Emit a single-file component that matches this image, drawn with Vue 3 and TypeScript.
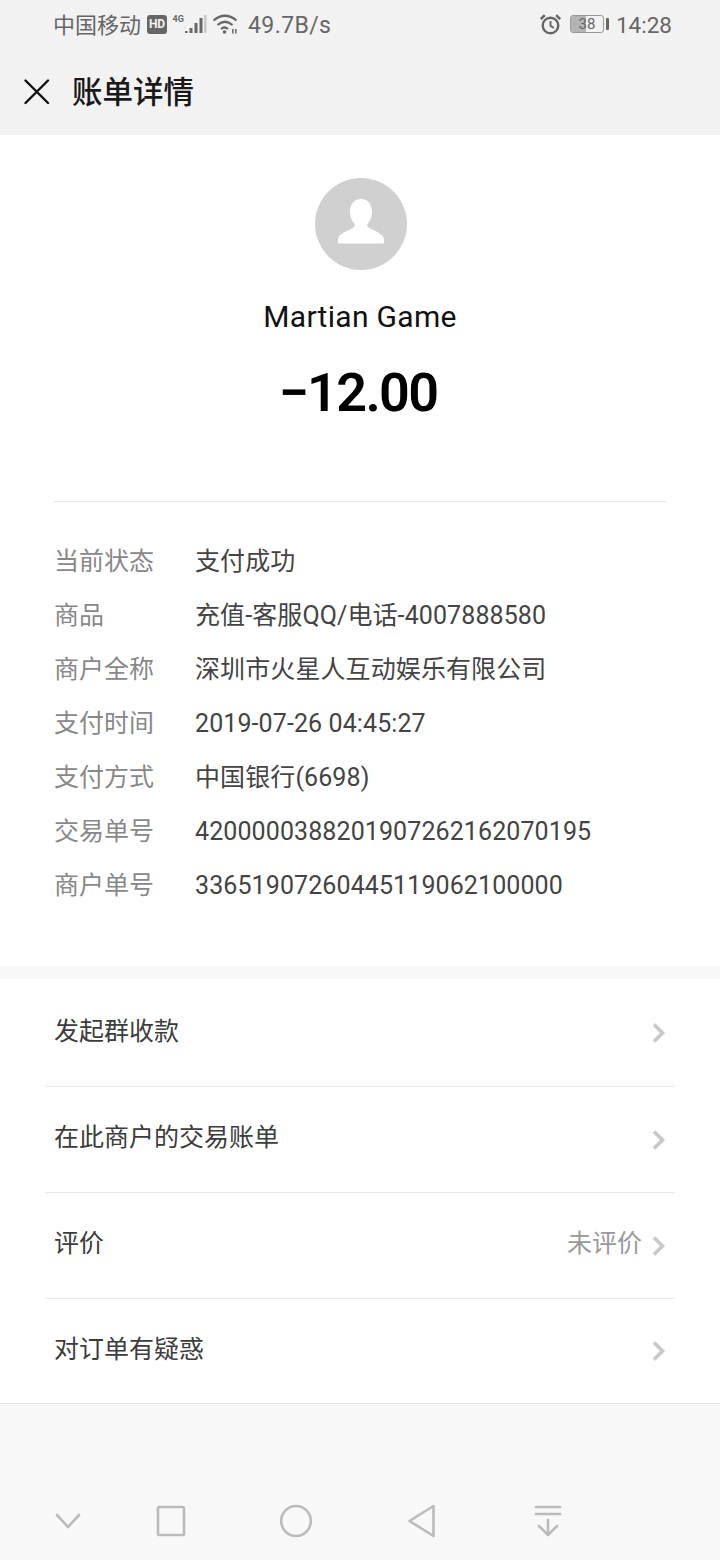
<script setup lang="ts">
const details = [
  { label: '当前状态', value: '支付成功' },
  { label: '商品', value: '充值-客服QQ/电话-4007888580' },
  { label: '商户全称', value: '深圳市火星人互动娱乐有限公司' },
  { label: '支付时间', value: '2019-07-26 04:45:27' },
  { label: '支付方式', value: '中国银行(6698)' },
  { label: '交易单号', value: '4200000388201907262162070195' },
  { label: '商户单号', value: '33651907260445119062100000' },
]

const actions = [
  { label: '发起群收款', note: '' },
  { label: '在此商户的交易账单', note: '' },
  { label: '评价', note: '未评价' },
  { label: '对订单有疑惑', note: '' },
]
</script>

<template>
  <div class="page">
    <div class="status-bar">
      <div class="status-left">
        <span class="carrier">中国移动</span>
        <span class="hd">HD</span>
        <svg class="signal" width="35" height="20" viewBox="0 0 35 20">
          <text x="0.500" y="8" font-size="9" font-weight="700" fill="#666" font-family="Roboto, sans-serif">4G</text>
          <rect x="13" y="17" width="2.500" height="2" fill="#666" />
          <rect x="17.500" y="14" width="3" height="5" fill="#666" />
          <rect x="22.500" y="9" width="3" height="10" fill="#666" />
          <rect x="27.500" y="4" width="3" height="15" fill="#666" />
          <rect x="32" y="1" width="2.500" height="18" fill="#c8c8c8" />
        </svg>
        <svg class="wifi" width="26" height="20" viewBox="0 0 26 20" fill="none" stroke="#666" stroke-width="2.200">
          <path d="M1.500 6.500Q13 -3 24.500 6.500" />
          <path d="M5.500 11Q13 4.500 20.500 11" />
          <path d="M9 15Q12.500 12 16 15" />
          <circle cx="12.500" cy="18" r="1.800" fill="#666" stroke="none" />
          <path d="M20.800 15V19.500M23.800 15V19.500" stroke-width="1.500" />
        </svg>
        <span class="speed">49.7B/s</span>
      </div>
      <div class="status-right">
        <svg class="alarm" width="22" height="22" viewBox="0 0 22 22" fill="none" stroke="#666" stroke-width="2.400">
          <circle cx="11.500" cy="12.500" r="7.800" />
          <path d="M11.500 8V12.800L14.700 15" stroke-width="1.900" />
          <path d="M1.800 6.200L5.800 2.200M21.200 6.200L17.200 2.200" stroke-width="2.600" />
        </svg>
        <span class="battery">
          <span class="battery-body"><span class="battery-fill"></span><span class="battery-num">38</span></span>
          <span class="battery-tip"></span>
        </span>
        <span class="clock">14:28</span>
      </div>
    </div>

    <header class="nav">
      <svg width="26" height="26" viewBox="0 0 26 26" fill="none" stroke="#111" stroke-width="2.400" stroke-linecap="round">
        <path d="M1.500 1.500L24 24M24 1.500L1.500 24" />
      </svg>
      <span class="nav-title">账单详情</span>
    </header>

    <section class="summary">
      <div class="avatar">
        <svg class="avatar-icon" width="50" height="46" viewBox="0 0 50 46" fill="#fff">
          <path d="M25 1C32 1 36 6.500 36 13.500C36 19 34 23 31.500 26C31 27 31 28.500 32.500 29.500C37 32 44 34.500 47 38.500C48.500 41 48.500 44 47.500 45.500H2.500C1.500 44 1.500 41 3 38.500C6 34.500 13 32 17.500 29.500C19 28.500 19 27 18.500 26C16 23 14 19 14 13.500C14 6.500 18 1 25 1Z" />
        </svg>
      </div>
      <div class="merchant">Martian Game</div>
      <div class="amount">−12.00</div>
    </section>

    <section class="details">
      <div v-for="row in details" :key="row.label" class="detail-row">
        <span class="detail-label">{{ row.label }}</span>
        <span class="detail-value">{{ row.value }}</span>
      </div>
    </section>

    <ul class="actions">
      <li v-for="item in actions" :key="item.label" class="action">
        <span class="action-label">{{ item.label }}</span>
        <span v-if="item.note" class="action-note">{{ item.note }}</span>
        <svg class="chevron" width="14" height="22" viewBox="0 0 14 22" fill="none" stroke="#c8c8c8" stroke-width="3.600">
          <path d="M2 2.500L10.500 11L2 19.500" />
        </svg>
      </li>
    </ul>

    <footer class="bottom">
      <svg width="30" height="22" viewBox="0 0 30 22" fill="none" stroke="#bbb" stroke-width="2.600" stroke-linecap="round" stroke-linejoin="round">
        <path d="M4 5L15 17L26 5" />
      </svg>
      <svg class="nav-square" width="30" height="32" viewBox="0 0 30 32" fill="none" stroke="#bbb" stroke-width="2.600" stroke-linejoin="round">
        <rect x="2" y="2" width="26" height="28" rx="1" />
      </svg>
      <svg class="nav-circle" width="34" height="34" viewBox="0 0 34 34" fill="none" stroke="#bbb" stroke-width="2.600">
        <ellipse cx="17" cy="17" rx="14.800" ry="15" />
      </svg>
      <svg class="nav-back" width="30" height="34" viewBox="0 0 30 34" fill="none" stroke="#bbb" stroke-width="2.600" stroke-linejoin="round">
        <path d="M27.500 2V32L3.500 17Z" />
      </svg>
      <svg class="nav-hide" width="30" height="34" viewBox="0 0 30 34" fill="none" stroke="#bbb" stroke-width="2.600" stroke-linecap="round" stroke-linejoin="round">
        <path d="M3 3H27M3 10H27" />
        <path d="M15 16V31M6 22L15 31L24 22" />
      </svg>
    </footer>
  </div>
</template>

<style>
html,
body {
  margin: 0;
  background: #f8f8f8;
}
</style>

<style scoped>
.page {
  width: 720px;
  height: 1560px;
  display: flex;
  flex-direction: column;
  overflow: hidden;
  background: #f8f8f8;
  font-family: Roboto, "Noto Sans CJK SC", sans-serif;
}

.status-bar {
  height: 48px;
  padding: 0 48px 0 53px;
  display: flex;
  align-items: center;
  justify-content: space-between;
  background: #f2f2f2;
  color: #666;
  font-size: 23px;
  line-height: 28px;
  box-sizing: border-box;
}

.status-left,
.status-right {
  display: flex;
  align-items: center;
}

.carrier {
  margin-top: 3px;
  font-size: 22px;
}

.hd {
  margin-left: 6px;
  width: 20px;
  height: 19px;
  line-height: 19px;
  border-radius: 3px;
  background: #666;
  color: #f2f2f2;
  font-size: 12px;
  font-weight: 700;
  text-align: center;
}

.signal {
  margin-left: 5px;
}

.wifi {
  margin-left: 5px;
}

.speed {
  margin-top: 3px;
  margin-left: 10px;
  letter-spacing: 0.4px;
}

.alarm {
  margin-right: 9px;
}

.battery {
  display: flex;
  align-items: center;
  margin-right: 7px;
}

.battery-body {
  position: relative;
  width: 34px;
  height: 18px;
  border: 1px solid #999;
  border-radius: 3px;
  overflow: hidden;
  box-sizing: border-box;
}

.battery-fill {
  display: block;
  width: 15px;
  height: 100%;
  background: #b4b4b4;
}

.battery-num {
  position: absolute;
  inset: 0;
  font-size: 15px;
  line-height: 16px;
  text-align: center;
  color: #666;
}

.battery-tip {
  width: 3px;
  height: 12px;
  margin-left: 2px;
  border-radius: 1px;
  background: #666;
}

.clock {
  margin-top: 1px;
  font-size: 22.500px;
}

.nav {
  height: 87px;
  padding-left: 24px;
  display: flex;
  align-items: center;
  gap: 22px;
  background: #f2f2f2;
  box-sizing: border-box;
}

.nav-title {
  margin-top: 3px;
  font-size: 30.500px;
  line-height: 40px;
  font-weight: 500;
  color: #191919;
}

.summary {
  height: 366px;
  padding-top: 43px;
  box-sizing: border-box;
  display: flex;
  flex-direction: column;
  align-items: center;
  background: #fff;
}

.avatar {
  width: 92px;
  height: 92px;
  margin-left: 2px;
  border-radius: 50%;
  background: #d0d0d0;
  display: flex;
  align-items: center;
  justify-content: center;
}

.avatar-icon {
  margin-bottom: 6px;
}

.merchant {
  margin-top: 29px;
  font-size: 30px;
  line-height: 36px;
  color: #111;
  letter-spacing: 0.3px;
}

.amount {
  margin-top: 26px;
  margin-right: 4px;
  font-size: 54px;
  line-height: 64px;
  font-weight: 600;
  letter-spacing: -1.700px;
  color: #000;
}

.details {
  padding: 34px 54px 0;
  height: 465px;
  box-sizing: border-box;
  background: #fff linear-gradient(#e8e8e8, #e8e8e8) 54px 0 / 612px 1px no-repeat;
}

.detail-row {
  height: 54px;
  display: flex;
  align-items: center;
  font-size: 25px;
  line-height: 32px;
}

.detail-label {
  width: 141px;
  flex: none;
  color: #888;
}

.detail-value {
  color: #444;
  letter-spacing: 0.1px;
}

.actions {
  list-style: none;
  margin: 13px 0 0;
  padding: 1px 45px 0;
  background: #fff;
  border-bottom: 1px solid #e4e4e4;
}

.action {
  height: 106px;
  display: flex;
  align-items: center;
  padding: 0 9px;
  border-top: 1px solid #e8e8e8;
  box-sizing: border-box;
}

.action:first-child {
  border-top: none;
}

.action:last-child {
  height: 105px;
}

.action-label {
  flex: 1;
  margin-bottom: 3px;
  font-size: 25px;
  line-height: 32px;
  color: #3c3c3c;
}

.action-note {
  margin-bottom: 3px;
  margin-right: 10px;
  font-size: 25px;
  line-height: 32px;
  color: #999;
}

.bottom {
  margin-top: auto;
  height: 34px;
  padding: 0 0 22px 53px;
  display: flex;
  align-items: center;
}

.nav-square {
  margin-left: 73px;
}

.nav-circle {
  margin-left: 93px;
}

.nav-back {
  margin-left: 93px;
}

.nav-hide {
  margin-left: 97px;
}
</style>
